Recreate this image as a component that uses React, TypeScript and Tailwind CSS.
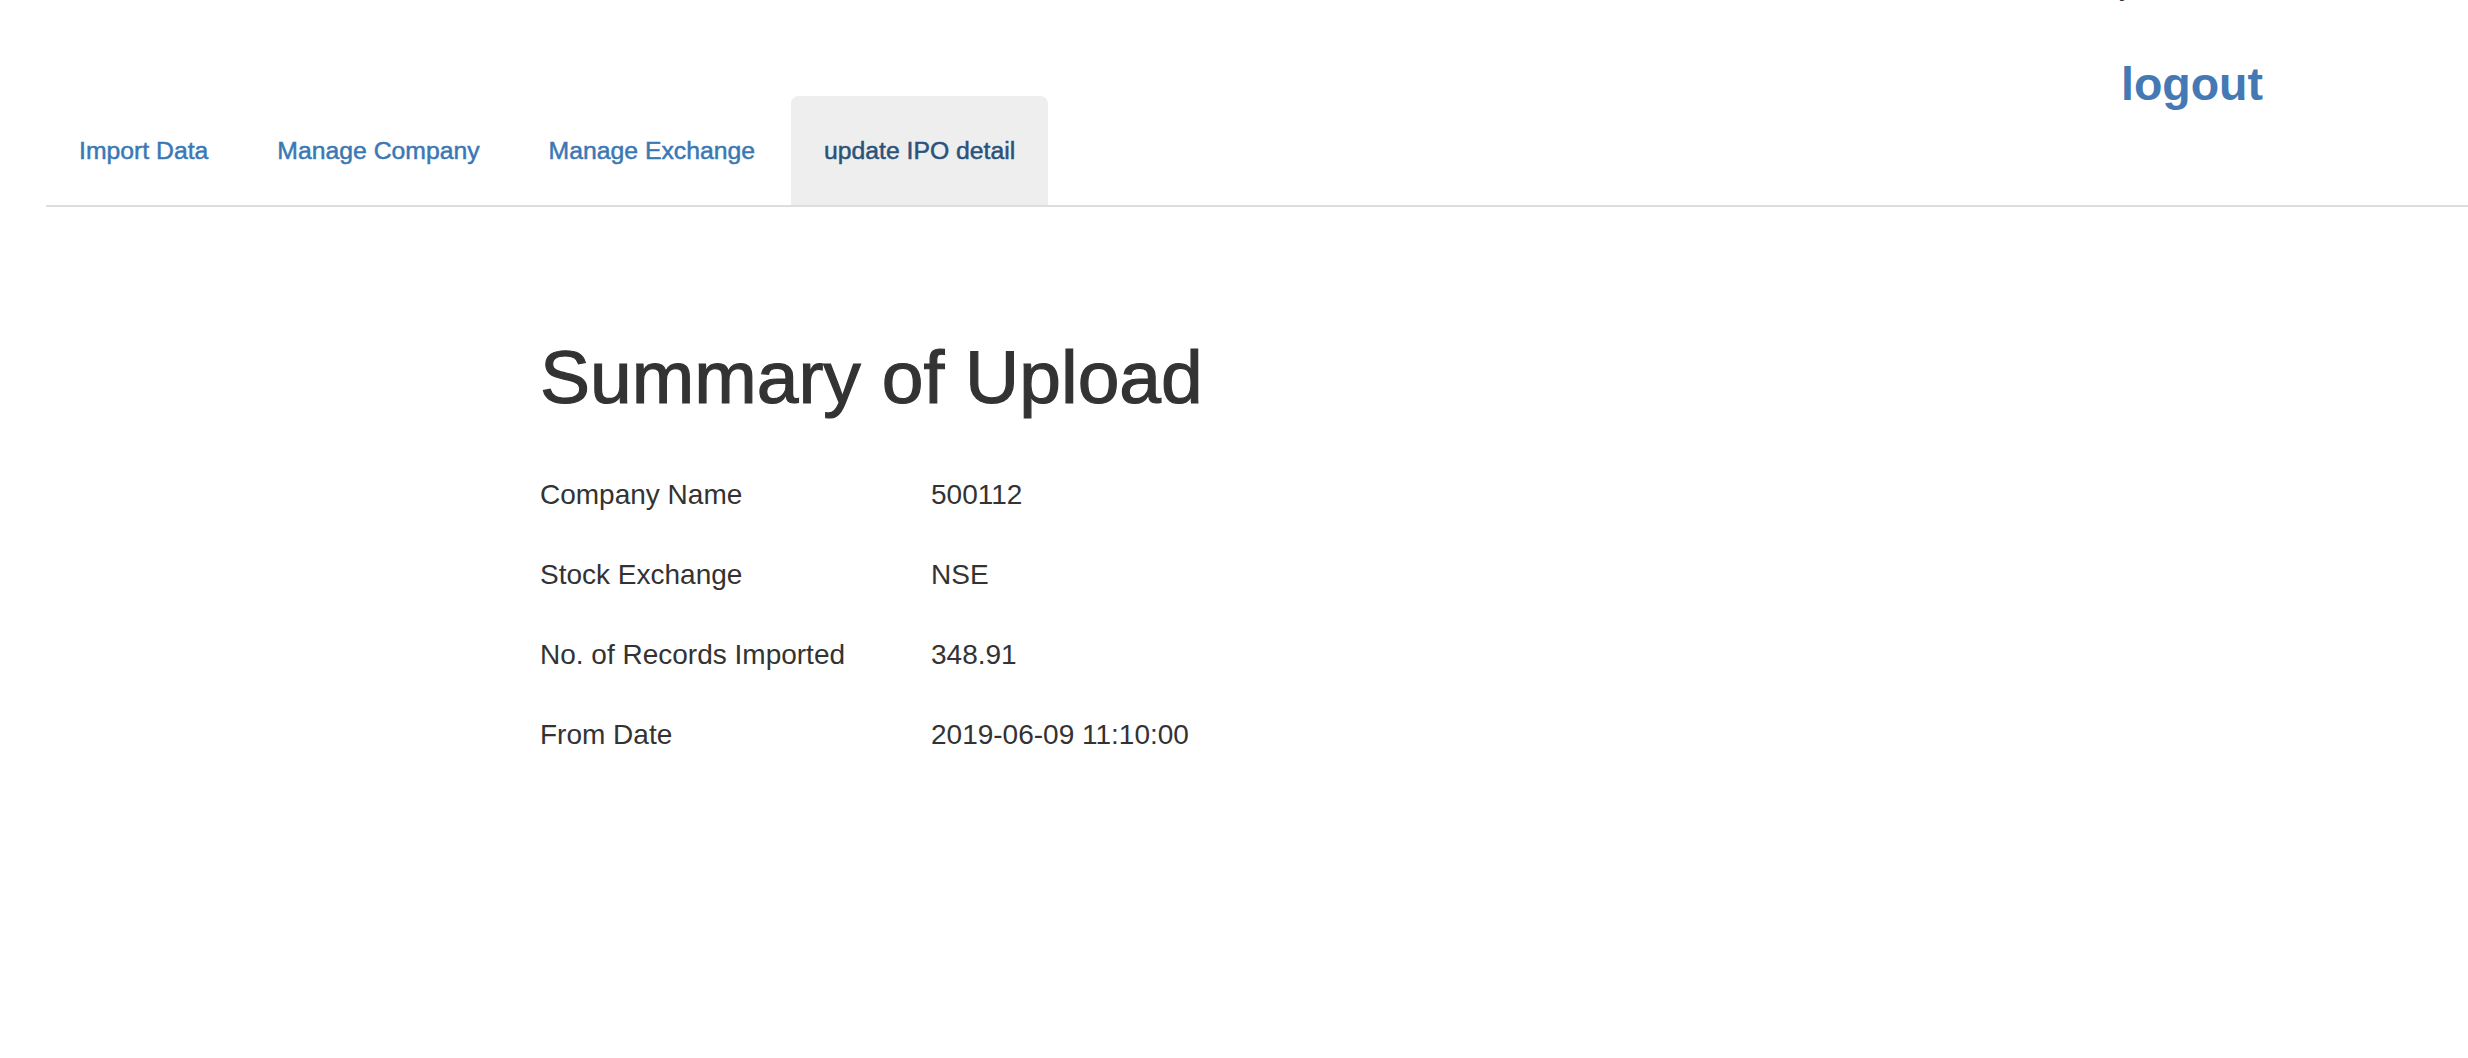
import React from 'react';

const tabs = ['Import Data', 'Manage Company', 'Manage Exchange', 'update IPO detail'];
const activeTab = 'update IPO detail';

const summary: { label: string; value: string }[] = [
  { label: 'Company Name', value: '500112' },
  { label: 'Stock Exchange', value: 'NSE' },
  { label: 'No. of Records Imported', value: '348.91' },
  { label: 'From Date', value: '2019-06-09 11:10:00' },
];

export default function App() {
  return (
    <div className="min-h-[1058px] w-full bg-white text-[#333333] font-['Liberation_Sans','Helvetica_Neue',Arial,sans-serif]">
      {/* header: tabs + logout share one bottom rule */}
      <div className="ml-[46px] flex items-start border-b-2 border-[#dddddd]">
        <ul className="flex pt-[96px]">
          {tabs.map(tab => {
            const isActive = tab === activeTab;
            return (
              <li key={tab} className="mr-[3px]">
                <a
                  href="#"
                  className={
                    isActive
                      ? 'flex h-[109px] items-center rounded-t-[8px] bg-[#eeeeee] px-[33px] text-[24.75px] text-[#2a527a] [-webkit-text-stroke:0.5px_#2a527a]'
                      : 'flex h-[109px] items-center rounded-t-[8px] px-[33px] text-[24.75px] text-[#3a78b5] [-webkit-text-stroke:0.5px_#3a78b5]'
                  }
                >
                  {tab}
                </a>
              </li>
            );
          })}
        </ul>
        <div className="relative ml-auto mr-[205px] mt-[59px]">
          <span className="absolute left-[-2px] top-[-87px] text-[28px] leading-none text-[#333333]">y</span>
          <a href="#" className="block h-[50px] text-[46.5px] font-bold leading-[50px] text-[#4479b4]">
            logout
          </a>
        </div>
      </div>

      {/* summary */}
      <div className="ml-[540px] pt-[129px]">
        <h1 className="mb-[36px] text-[75px] leading-[1.1] text-[#333333] [-webkit-text-stroke:1.2px_#333333]">
          Summary of Upload
        </h1>
        <div className="grid grid-cols-[391px_auto] text-[28px] leading-[40px]">
          {summary.map(row => (
            <React.Fragment key={row.label}>
              <div className="py-[20px]">{row.label}</div>
              <div className="py-[20px]">{row.value}</div>
            </React.Fragment>
          ))}
        </div>
      </div>
    </div>
  );
}
